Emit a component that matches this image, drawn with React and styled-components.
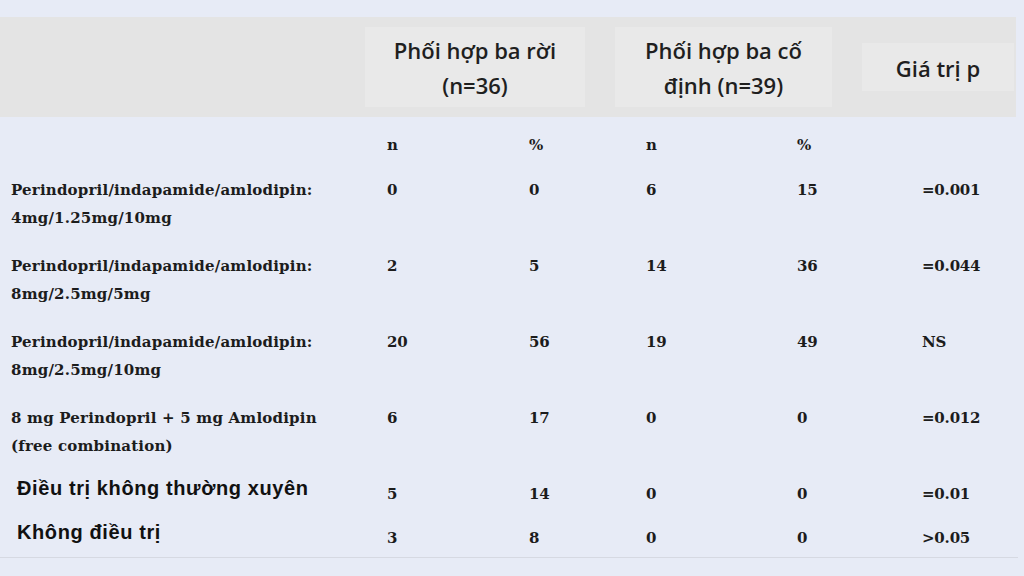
import React from 'react';
import styled, { createGlobalStyle } from 'styled-components';

const GlobalStyle = createGlobalStyle`
  html, body {
    margin: 0;
    padding: 0;
    background: #e7ebf6;
  }
  body {
    width: 1024px;
    height: 576px;
    overflow: hidden;
  }
`;

const Page = styled.div`
  width: 1024px;
  height: 576px;
  padding-top: 17px;
  box-sizing: border-box;
  background: #e7ebf6;
`;

const HeaderBand = styled.div`
  width: 1016px;
  height: 100px;
  background: #e4e4e4;
  display: flex;
  align-items: center;
  padding-left: 365px;
  box-sizing: border-box;
  gap: 30px;
`;

const HeadCell = styled.div`
  width: ${(p) => p.$w}px;
  height: ${(p) => p.$h}px;
  background: #e9e9e9;
  display: flex;
  align-items: center;
  justify-content: center;
  text-align: center;
  font-family: 'Open Sans', 'Noto Sans', sans-serif;
  font-weight: 600;
  font-size: 22px;
  line-height: 35px;
  color: #1f1f1f;
  padding-top: 2px;
  box-sizing: border-box;
`;

const Body = styled.div`
  width: 1018px;
  padding-top: 14px;
  display: flex;
  flex-direction: column;
  border-bottom: 1px solid #d6d9e2;
  height: 441px;
  box-sizing: border-box;
`;

const Row = styled.div`
  display: grid;
  grid-template-columns: 387px 142px 117px 151px 125px 96px;
  margin-top: ${(p) => p.$mt || 0}px;
  height: ${(p) => p.$h}px;
  font-family: 'DejaVu Serif', 'Liberation Serif', serif;
  font-weight: bold;
  font-size: 15px;
  line-height: 28px;
  color: #1c1c1c;
  letter-spacing: 0.2px;
`;

const Label = styled.div`
  padding-left: 11px;
  white-space: pre-line;
  ${(p) =>
    p.$sans &&
    `
    padding-left: 17px;
    font-family: 'Liberation Sans', Arial, sans-serif;
    font-size: 20px;
    letter-spacing: 0.6px;
    color: #111;
  `}
`;

const Cell = styled.div`
  padding-top: ${(p) => p.$pt || 0}px;
  letter-spacing: -0.2px;
`;

const rows = [
  { label: 'Perindopril/indapamide/amlodipin:\n4mg/1.25mg/10mg', v: ['0', '0', '6', '15', '=0.001'] },
  { label: 'Perindopril/indapamide/amlodipin:\n8mg/2.5mg/5mg', v: ['2', '5', '14', '36', '=0.044'] },
  { label: 'Perindopril/indapamide/amlodipin:\n8mg/2.5mg/10mg', v: ['20', '56', '19', '49', 'NS'] },
  { label: '8 mg Perindopril + 5 mg Amlodipin\n(free combination)', v: ['6', '17', '0', '0', '=0.012'] },
];

const simple = [
  { label: 'Điều trị không thường xuyên', v: ['5', '14', '0', '0', '=0.01'], h: 45 },
  { label: 'Không điều trị', v: ['3', '8', '0', '0', '>0.05'], h: 39 },
];

export default function App() {
  return (
    <>
      <GlobalStyle />
      <Page>
        <HeaderBand>
          <HeadCell $w={220} $h={80}>
            Phối hợp ba rời
            <br />
            (n=36)
          </HeadCell>
          <HeadCell $w={217} $h={80}>
            Phối hợp ba cố
            <br />
            định (n=39)
          </HeadCell>
          <HeadCell $w={152} $h={48}>
            Giá trị p
          </HeadCell>
        </HeaderBand>
        <Body>
          <Row $h={28}>
            <Label />
            <Cell>n</Cell>
            <Cell>%</Cell>
            <Cell>n</Cell>
            <Cell>%</Cell>
            <Cell />
          </Row>
          {rows.map((r, i) => (
            <Row key={i} $h={56} $mt={i === 0 ? 17 : 20}>
              <Label>{r.label}</Label>
              {r.v.map((x, j) => (
                <Cell key={j}>{x}</Cell>
              ))}
            </Row>
          ))}
          {simple.map((r, i) => (
            <Row key={i} $h={r.h} $mt={i === 0 ? 14 : 0}>
              <Label $sans>{r.label}</Label>
              {r.v.map((x, j) => (
                <Cell key={j} $pt={6}>
                  {x}
                </Cell>
              ))}
            </Row>
          ))}
        </Body>
      </Page>
    </>
  );
}
